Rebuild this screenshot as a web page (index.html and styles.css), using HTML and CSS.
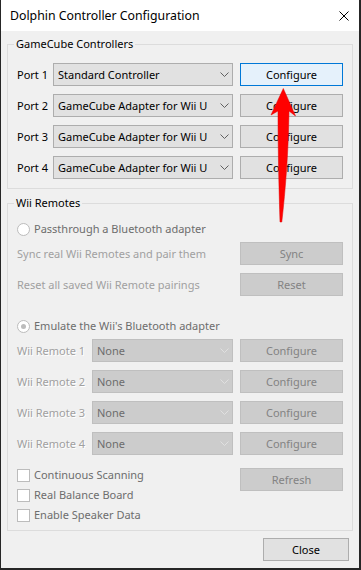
FILE: index.html
```html
<!DOCTYPE html>
<html>
<head>
<meta charset="utf-8">
<title>Dolphin Controller Configuration</title>
<link rel="stylesheet" href="styles.css">
</head>
<body>
<div class="window">
  <div class="titlebar">
    <span class="title">Dolphin Controller Configuration</span>
    <svg class="close-x" width="10" height="10" viewBox="0 0 10 10"><path d="M0.5 0.5L9.5 9.5M9.5 0.5L0.5 9.5" stroke="#000" stroke-width="1"/></svg>
  </div>

  <div class="content">
    <fieldset class="group gc">
      <legend>GameCube Controllers</legend>
      <div class="row">
        <span class="lbl">Port 1</span>
        <div class="combo"><span>Standard Controller</span><svg class="chev" width="9" height="5" viewBox="0 0 9 5"><path d="M0.5 0.5L4.5 4.5L8.5 0.5" fill="none" stroke="#606060"/></svg></div>
        <button class="btn focus">Configure</button>
      </div>
      <div class="row">
        <span class="lbl">Port 2</span>
        <div class="combo"><span>GameCube Adapter for Wii U</span><svg class="chev" width="9" height="5" viewBox="0 0 9 5"><path d="M0.5 0.5L4.5 4.5L8.5 0.5" fill="none" stroke="#606060"/></svg></div>
        <button class="btn">Configure</button>
      </div>
      <div class="row">
        <span class="lbl">Port 3</span>
        <div class="combo"><span>GameCube Adapter for Wii U</span><svg class="chev" width="9" height="5" viewBox="0 0 9 5"><path d="M0.5 0.5L4.5 4.5L8.5 0.5" fill="none" stroke="#606060"/></svg></div>
        <button class="btn">Configure</button>
      </div>
      <div class="row">
        <span class="lbl">Port 4</span>
        <div class="combo"><span>GameCube Adapter for Wii U</span><svg class="chev" width="9" height="5" viewBox="0 0 9 5"><path d="M0.5 0.5L4.5 4.5L8.5 0.5" fill="none" stroke="#606060"/></svg></div>
        <button class="btn">Configure</button>
      </div>
    </fieldset>

    <fieldset class="group wii">
      <legend>Wii Remotes</legend>
      <div class="opt"><span class="radio"></span>Passthrough a Bluetooth adapter</div>
      <div class="pair"><span class="dim">Sync real Wii Remotes and pair them</span><button class="btn off">Sync</button></div>
      <div class="pair"><span class="dim">Reset all saved Wii Remote pairings</span><button class="btn off">Reset</button></div>
      <div class="opt emu"><span class="radio on"></span>Emulate the Wii's Bluetooth adapter</div>
      <div class="row wrow">
        <span class="lbl etched">Wii Remote 1</span>
        <div class="combo off"><span>None</span><svg class="chev" width="9" height="5" viewBox="0 0 9 5"><path d="M0.5 0.5L4.5 4.5L8.5 0.5" fill="none" stroke="#e0e0e0"/></svg></div>
        <button class="btn off">Configure</button>
      </div>
      <div class="row wrow">
        <span class="lbl etched">Wii Remote 2</span>
        <div class="combo off"><span>None</span><svg class="chev" width="9" height="5" viewBox="0 0 9 5"><path d="M0.5 0.5L4.5 4.5L8.5 0.5" fill="none" stroke="#e0e0e0"/></svg></div>
        <button class="btn off">Configure</button>
      </div>
      <div class="row wrow">
        <span class="lbl etched">Wii Remote 3</span>
        <div class="combo off"><span>None</span><svg class="chev" width="9" height="5" viewBox="0 0 9 5"><path d="M0.5 0.5L4.5 4.5L8.5 0.5" fill="none" stroke="#e0e0e0"/></svg></div>
        <button class="btn off">Configure</button>
      </div>
      <div class="row wrow">
        <span class="lbl etched">Wii Remote 4</span>
        <div class="combo off"><span>None</span><svg class="chev" width="9" height="5" viewBox="0 0 9 5"><path d="M0.5 0.5L4.5 4.5L8.5 0.5" fill="none" stroke="#e0e0e0"/></svg></div>
        <button class="btn off">Configure</button>
      </div>
      <div class="bottom">
        <div class="checks">
          <div class="check"><span class="box"></span>Continuous Scanning</div>
          <div class="check"><span class="box"></span>Real Balance Board</div>
          <div class="check"><span class="box"></span>Enable Speaker Data</div>
        </div>
        <button class="btn off refresh">Refresh</button>
      </div>
    </fieldset>

    <div class="footer">
      <button class="btn close">Close</button>
    </div>
  </div>

  <svg class="arrow" width="28" height="138" viewBox="270 86 28 138">
    <path d="M283.3 88.5L295.5 116L289 111C288.5 150 285.5 190 281.8 222L280 222C279 190 278 150 278 111L271 115Z" fill="#ff0000" stroke="#e00000" stroke-width="0.5"/>
  </svg>
</div>
</body>
</html>
```

FILE: styles.css
```css
body{margin:0;font-family:"Noto Sans","Liberation Sans",sans-serif;font-size:11px;line-height:16px;color:#000;background:#fff;}
.window{position:relative;width:358px;height:568px;border:solid #262626;border-width:0 2px 2px 1px;background:#f0f0f0;}

.titlebar{height:31px;background:#fff;display:flex;align-items:center;justify-content:space-between;padding:0 10px 0 9px;}
.title{font-size:12.3px;}
.close-x{display:block;}

.content{padding:5px 6px 0 6px;}
.group{margin:0;border:1px solid #dcdcdc;padding:11px 9px 9px 9px;}
.group legend{padding:0 2px;margin-left:-3px;}
.wii{margin-top:6px;padding:10px 9px 5px 9px;}

.row{display:grid;grid-template-columns:29px 180px 103px;column-gap:7px;align-items:center;height:23px;}
.row + .row{margin-top:8px;}
.lbl{white-space:nowrap;}
.wrow{grid-template-columns:68px 141px 103px;}
.opt + .wrow{margin-top:5px;}

.combo{height:23px;box-sizing:border-box;border:1px solid #adadad;background:#e1e1e1;display:flex;align-items:center;justify-content:space-between;padding:0 3px 0 4px;white-space:nowrap;}
.combo.off{background:#cccccc;border-color:#bfbfbf;color:#6d6d6d;}
.chev{display:block;}

.btn{height:23px;box-sizing:border-box;border:1px solid #adadad;background:#e1e1e1;font:inherit;color:#000;padding:0;margin:0;}
.btn.focus{background:#e5f1fb;border-color:#0078d7;}
.btn.off{background:#cccccc;border-color:#bfbfbf;color:#838383;}

.opt{display:flex;align-items:center;gap:4px;height:16px;color:#6d6d6d;}
.opt.emu{margin-top:22px;}
.radio{width:13px;height:13px;box-sizing:border-box;border:1px solid #bcbcbc;border-radius:50%;background:#fff;display:flex;align-items:center;justify-content:center;}
.radio.on::after{content:"";width:5px;height:5px;border-radius:50%;background:#bcbcbc;}

.pair{display:grid;grid-template-columns:1fr 103px;align-items:center;height:23px;margin-top:5px;}
.pair + .pair{margin-top:8px;}
.dim{color:#a0a0a0;}
.etched{color:#a0a0a0;text-shadow:1px 1px 0 #fff;}

.bottom{display:flex;justify-content:space-between;align-items:flex-start;margin-top:10px;}
.check{display:flex;align-items:center;gap:4px;height:20px;color:#6d6d6d;}
.box{width:13px;height:13px;box-sizing:border-box;border:1px solid #bcbcbc;background:#fff;}
.refresh{width:103px;margin-top:3px;}

.footer{display:flex;justify-content:flex-end;padding:7px 4px 0 0;}
.close{width:86px;}

.arrow{position:absolute;left:269px;top:86px;}
```
